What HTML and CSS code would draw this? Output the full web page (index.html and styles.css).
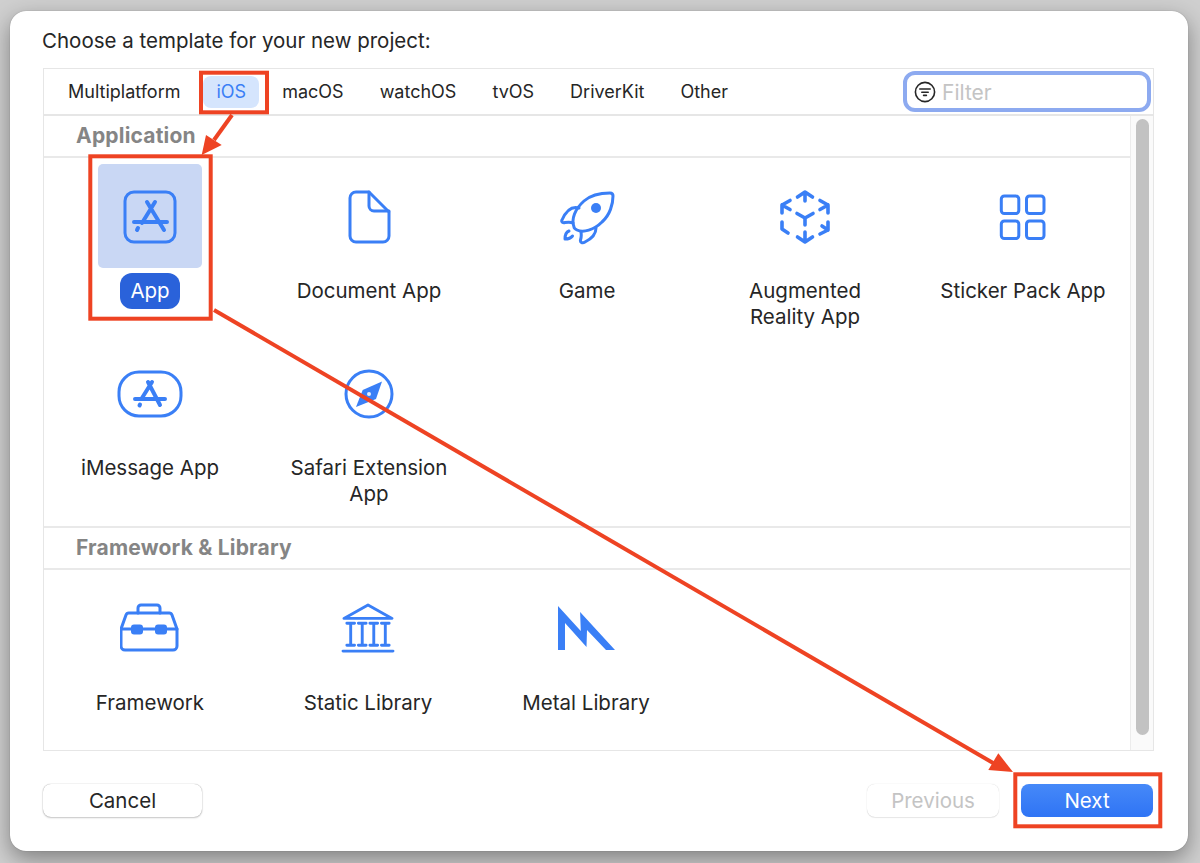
FILE: index.html
```html
<!DOCTYPE html>
<html lang="en">
<head>
    <meta charset="UTF-8">
    <title>Choose a template</title>
    <link rel="stylesheet" href="styles.css">
</head>
<body>
    <div class="sheet">
        <h1 class="title">Choose a template for your new project:</h1>

        <div class="panel">
            <div class="tabs">
                <span class="tab">Multiplatform</span>
                <span class="tab active">iOS</span>
                <span class="tab">macOS</span>
                <span class="tab">watchOS</span>
                <span class="tab">tvOS</span>
                <span class="tab">DriverKit</span>
                <span class="tab">Other</span>
                <div class="filter">
                    <svg class="filter-icon" viewBox="0 0 22 22">
                        <circle cx="11" cy="11" r="9.6"/>
                        <path d="M5.8 8h10.4M7.8 11.2h6.4M9.6 14.4h2.8"/>
                    </svg>
                    <span class="filter-text">Filter</span>
                </div>
            </div>

            <div class="content">
                <div class="list">
                    <div class="section-head">Application</div>
                    <div class="grid grid-app">
                        <div class="item selected">
                            <div class="tile">
                                <svg class="icon" viewBox="0 0 56 56">
                                    <rect x="3" y="3" width="50" height="50" rx="9"/>
                                    <path class="glyph" d="M33 13 L20 34 M25 13 L42 41 M12 33 H45 M16 39 L15 41"/>
                                </svg>
                            </div>
                            <div class="label"><span>App</span></div>
                        </div>
                        <div class="item">
                            <div class="tile">
                                <svg class="icon" viewBox="0 0 56 56">
                                    <path d="M9 9 a6 6 0 0 1 6-6 H28 L48 23 V47 a6 6 0 0 1 -6 6 H15 a6 6 0 0 1 -6-6 Z"/>
                                    <path d="M28 3 V17 a5 5 0 0 0 5 5 H48"/>
                                </svg>
                            </div>
                            <div class="label"><span>Document App</span></div>
                        </div>
                        <div class="item">
                            <div class="tile">
                                <svg class="icon" viewBox="0 0 56 56">
                                    <path d="M15 38 C12 30 16 20 25 12 C33 5 43 4 51 4 C53 4 54 5 54 7 C54 15 51 26 43 33 C35 41 24 44 18 41 C16 40 15 39 15 38 Z"/>
                                    <path d="M20 19 C13 17 7 22 3 31 C2 33 4 34 6 33.5 C9 33 12 33 14 34"/>
                                    <path d="M37 39 C37 45 32 50 26 53 C23 55 21 53 21.500 51 C22.500 48 22.500 46 22 43"/>
                                    <path d="M10 42 C7.500 43 6 46 6 50 C9 50 12 49 13.500 47"/>
                                    <circle class="solid" cx="37" cy="19" r="5"/>
                                </svg>
                            </div>
                            <div class="label"><span>Game</span></div>
                        </div>
                        <div class="item">
                            <div class="tile">
                                <svg class="icon icon-ar" viewBox="0 0 56 56">
                                    <path d="M28 3 V12 M20.500 8 L28 3 L35.500 8"/>
                                    <path d="M28 53 V43 M20.500 48 L28 53 L35.500 48"/>
                                    <path d="M5 24 V16 L13 11.500 M5 16 L13 20.500"/>
                                    <path d="M51 24 V16 L43 11.500 M51 16 L43 20.500"/>
                                    <path d="M5 33 V40 L11 44"/>
                                    <path d="M51 33 V41 L43 45 M51 41 L45 37"/>
                                    <path d="M20 24.500 L28 29 L36 24.500 M28 29 V36"/>
                                </svg>
                            </div>
                            <div class="label"><span>Augmented<br>Reality App</span></div>
                        </div>
                        <div class="item">
                            <div class="tile">
                                <svg class="icon" viewBox="0 0 56 56">
                                    <rect x="6.300" y="7" width="17.500" height="17.500" rx="3"/>
                                    <rect x="31.500" y="7" width="17.500" height="17.500" rx="3"/>
                                    <rect x="6.300" y="32" width="17.500" height="17.500" rx="3"/>
                                    <rect x="31.500" y="32" width="17.500" height="17.500" rx="3"/>
                                </svg>
                            </div>
                            <div class="label"><span>Sticker Pack App</span></div>
                        </div>
                        <div class="item">
                            <div class="tile">
                                <svg class="icon icon-wide" viewBox="0 0 66 48">
                                    <rect x="2" y="2" width="62" height="44" rx="20"/>
                                    <path class="glyph" d="M35 12 L25 28 M31 12 L43 35 M18 29 H48 M23 34.500 L22.500 35.500"/>
                                </svg>
                            </div>
                            <div class="label"><span>iMessage App</span></div>
                        </div>
                        <div class="item">
                            <div class="tile">
                                <svg class="icon" viewBox="0 0 56 56">
                                    <circle cx="28" cy="28" r="23"/>
                                    <path class="solid" d="M41 15.500 L35 33 L15 41 L21.700 24 Z"/>
                                    <circle class="hole" cx="28" cy="28" r="2"/>
                                </svg>
                            </div>
                            <div class="label"><span>Safari Extension<br>App</span></div>
                        </div>
                    </div>

                    <div class="section-head">Framework &amp; Library</div>
                    <div class="grid grid-lib">
                        <div class="item">
                            <div class="tile">
                                <svg class="icon icon-box" viewBox="1 0 60 48">
                                    <path d="M19 9 V4 a3 3 0 0 1 3-3 H38 a3 3 0 0 1 3 3 V9"/>
                                    <path d="M2 25 L7 11 a3 3 0 0 1 3-2 H50 a3 3 0 0 1 3 2 L58 25 V42 a4 4 0 0 1 -4 4 H6 a4 4 0 0 1 -4-4 Z"/>
                                    <path d="M2 25 H58"/>
                                    <rect class="solid" x="12" y="20.500" width="12" height="10" rx="3"/>
                                    <rect class="solid" x="36" y="20.500" width="12" height="10" rx="3"/>
                                </svg>
                            </div>
                            <div class="label"><span>Framework</span></div>
                        </div>
                        <div class="item">
                            <div class="tile">
                                <svg class="icon icon-box" viewBox="0 0 54 52">
                                    <path d="M27 2 L52 16 H2 Z"/>
                                    <path d="M5 21 H13 M9 21 V44 M5 44 H13 M17 21 H25 M21 21 V44 M17 44 H25 M29 21 H37 M33 21 V44 M29 44 H37 M41 21 H49 M45 21 V44 M41 44 H49 M1 50 H53"/>
                                </svg>
                            </div>
                            <div class="label"><span>Static Library</span></div>
                        </div>
                        <div class="item">
                            <div class="tile">
                                <svg class="icon icon-metal" viewBox="0 0 57 44">
                                    <path class="solid" d="M0 0 L22.800 25 L22.100 6 L57 44 H48 L29 24 L28.500 41 L7 17 V44 H0 Z"/>
                                </svg>
                            </div>
                            <div class="label"><span>Metal Library</span></div>
                        </div>
                    </div>
                </div>

                <div class="scroller"><div class="thumb"></div></div>
            </div>
        </div>

        <div class="footer">
            <button class="btn">Cancel</button>
            <div class="footer-right">
                <button class="btn disabled">Previous</button>
                <button class="btn primary">Next</button>
            </div>
        </div>
    </div>

    <!-- red annotations drawn on top of the screenshot -->
    <svg class="marks" viewBox="0 0 1200 863">
        <g class="mark-box">
            <rect x="201" y="72.700" width="66" height="39.600"/>
            <rect x="90.300" y="156.300" width="120.400" height="162.400"/>
            <rect x="1015.300" y="774.300" width="145" height="52"/>
        </g>
        <path class="mark-line" d="M232 115 L214 140"/>
        <path class="mark-head" d="M201.700 155 L206 135 L221.700 145 Z"/>
        <path class="mark-line" d="M214 310 L1000 767"/>
        <path class="mark-head" d="M1013 772 L988.300 770 L998.300 753.300 Z"/>
    </svg>
</body>
</html>
```

FILE: styles.css
```css
html, body {
    margin: 0;
    height: 100%;
}
body {
    width: 1200px;
    height: 863px;
    overflow: hidden;
    box-sizing: border-box;
    padding: 11px 12px 12px 10px;
    font-family: Inter, "Liberation Sans", sans-serif;
    color: #262626;
    background: #cfcfcf;
}
.sheet {
    height: 100%;
    box-sizing: border-box;
    padding: 18px 34px 0 33px;
    background: #fff;
    border-radius: 16px;
    box-shadow: 0 0 1px rgba(0, 0, 0, 0.4), 0 8px 22px rgba(0, 0, 0, 0.38);
}
.title {
    margin: 0 0 0 -1px;
    height: 39px;
    font-size: 20.5px;
    line-height: 24px;
    font-weight: 400;
}
.panel {
    height: 683px;
    box-sizing: border-box;
    border: 1px solid #e6e6e6;
    display: flex;
    flex-direction: column;
}
.tabs {
    height: 47px;
    flex-shrink: 0;
    box-sizing: border-box;
    border-bottom: 2px solid #e6e6e6;
    display: flex;
    align-items: center;
    padding-left: 11px;
}
.tab {
    font-size: 18px;
    line-height: 32px;
    height: 32px;
    padding: 0 13px;
    margin-right: 10px;
    border-radius: 8px;
}
.tab.active {
    color: #3a7ff6;
    background: #d5e5fd;
}
.filter {
    margin-left: auto;
    margin-right: 2px;
    width: 248px;
    height: 41px;
    box-sizing: border-box;
    border: 4px solid #8daaf0;
    border-radius: 12px;
    display: flex;
    align-items: center;
    padding-left: 7px;
    gap: 6px;
}
.filter-icon {
    width: 22px;
    height: 22px;
    fill: none;
    stroke: #262626;
    stroke-width: 1.6;
    stroke-linecap: round;
}
.filter-text {
    padding-top: 2px;
    font-size: 21px;
    color: #c4c4c4;
}
.content {
    flex: 1;
    display: flex;
    min-height: 0;
}
.list {
    flex: 1;
    min-width: 0;
}
.section-head {
    height: 42px;
    box-sizing: border-box;
    border-bottom: 2px solid #e9e9e9;
    padding-left: 32px;
    font-size: 21px;
    letter-spacing: 0.2px;
    line-height: 40px;
    font-weight: 700;
    color: #858585;
}
.grid {
    display: grid;
    grid-auto-rows: 177px;
    box-sizing: border-box;
    padding-top: 6px;
}
.grid-app {
    height: 370px;
    border-bottom: 2px solid #e9e9e9;
    grid-template-columns: 216px repeat(4, 218px);
}
.grid-app .item:nth-child(5n+1) .tile,
.grid-app .item:nth-child(5n+1) .label {
    margin-left: -4px;
}
.grid-lib {
    height: 180px;
    margin-left: -3px;
    padding-top: 5px;
    grid-template-columns: repeat(5, 218px);
}
.grid-lib .label {
    margin-top: 6px;
}
.item {
    display: flex;
    flex-direction: column;
    align-items: center;
}
.tile {
    width: 104px;
    height: 104px;
    border-radius: 5px;
    display: flex;
    align-items: center;
    justify-content: center;
}
.item.selected .tile {
    background: #c9d7f4;
}
.icon {
    width: 56px;
    height: 56px;
    margin-top: 2px;
    fill: none;
    stroke: #3a7ff6;
    stroke-width: 3;
    stroke-linecap: round;
    stroke-linejoin: round;
}
.icon-ar {
    stroke-width: 3.6;
}
.icon-wide {
    width: 66px;
    height: 48px;
}
.icon-box {
    width: 60px;
    height: 50px;
}
.icon-metal {
    width: 57px;
    height: 44px;
}
.icon .glyph {
    stroke-width: 4;
}
.icon .solid {
    fill: #3a7ff6;
    stroke: none;
}
.icon .hole {
    fill: #e8effc;
    stroke: none;
}
.label {
    margin-top: 5px;
    font-size: 20.5px;
    line-height: 26px;
    text-align: center;
}
.label span {
    display: inline-block;
    padding: 5px 10px;
    border-radius: 12px;
}
.item.selected .label span {
    color: #fff;
    background: #2a62da;
}
.scroller {
    width: 23px;
    flex-shrink: 0;
    box-sizing: border-box;
    background: #fafafa;
    border-left: 1px solid #ececec;
    padding: 3px 4px 15px 5px;
}
.thumb {
    height: 100%;
    border-radius: 7px;
    background: #c2c2c2;
}
.footer {
    display: flex;
    justify-content: space-between;
    align-items: center;
    padding-top: 33px;
}
.footer-right {
    display: flex;
    gap: 22px;
    margin-right: 1px;
}
.btn {
    width: 159px;
    height: 33px;
    padding: 0;
    font-family: inherit;
    font-size: 20.5px;
    color: #262626;
    background: #fff;
    border: none;
    border-radius: 8px;
    box-shadow: 0 0 1px rgba(0, 0, 0, 0.4), 0 1px 2px rgba(0, 0, 0, 0.2);
}
.btn.disabled {
    width: 132px;
    color: #c4c4c4;
    box-shadow: 0 0 1px rgba(0, 0, 0, 0.2), 0 1px 1px rgba(0, 0, 0, 0.08);
}
.btn.primary {
    width: 132px;
    color: #fff;
    background: linear-gradient(#4689f8, #2f74f5);
    box-shadow: none;
}
.marks {
    position: absolute;
    left: 0;
    top: 0;
    width: 1200px;
    height: 863px;
    pointer-events: none;
}
.mark-box rect {
    fill: none;
    stroke: #ee4323;
    stroke-width: 4;
}
.mark-line {
    fill: none;
    stroke: #ee4323;
    stroke-width: 4;
}
.mark-head {
    fill: #ee4323;
}
```
